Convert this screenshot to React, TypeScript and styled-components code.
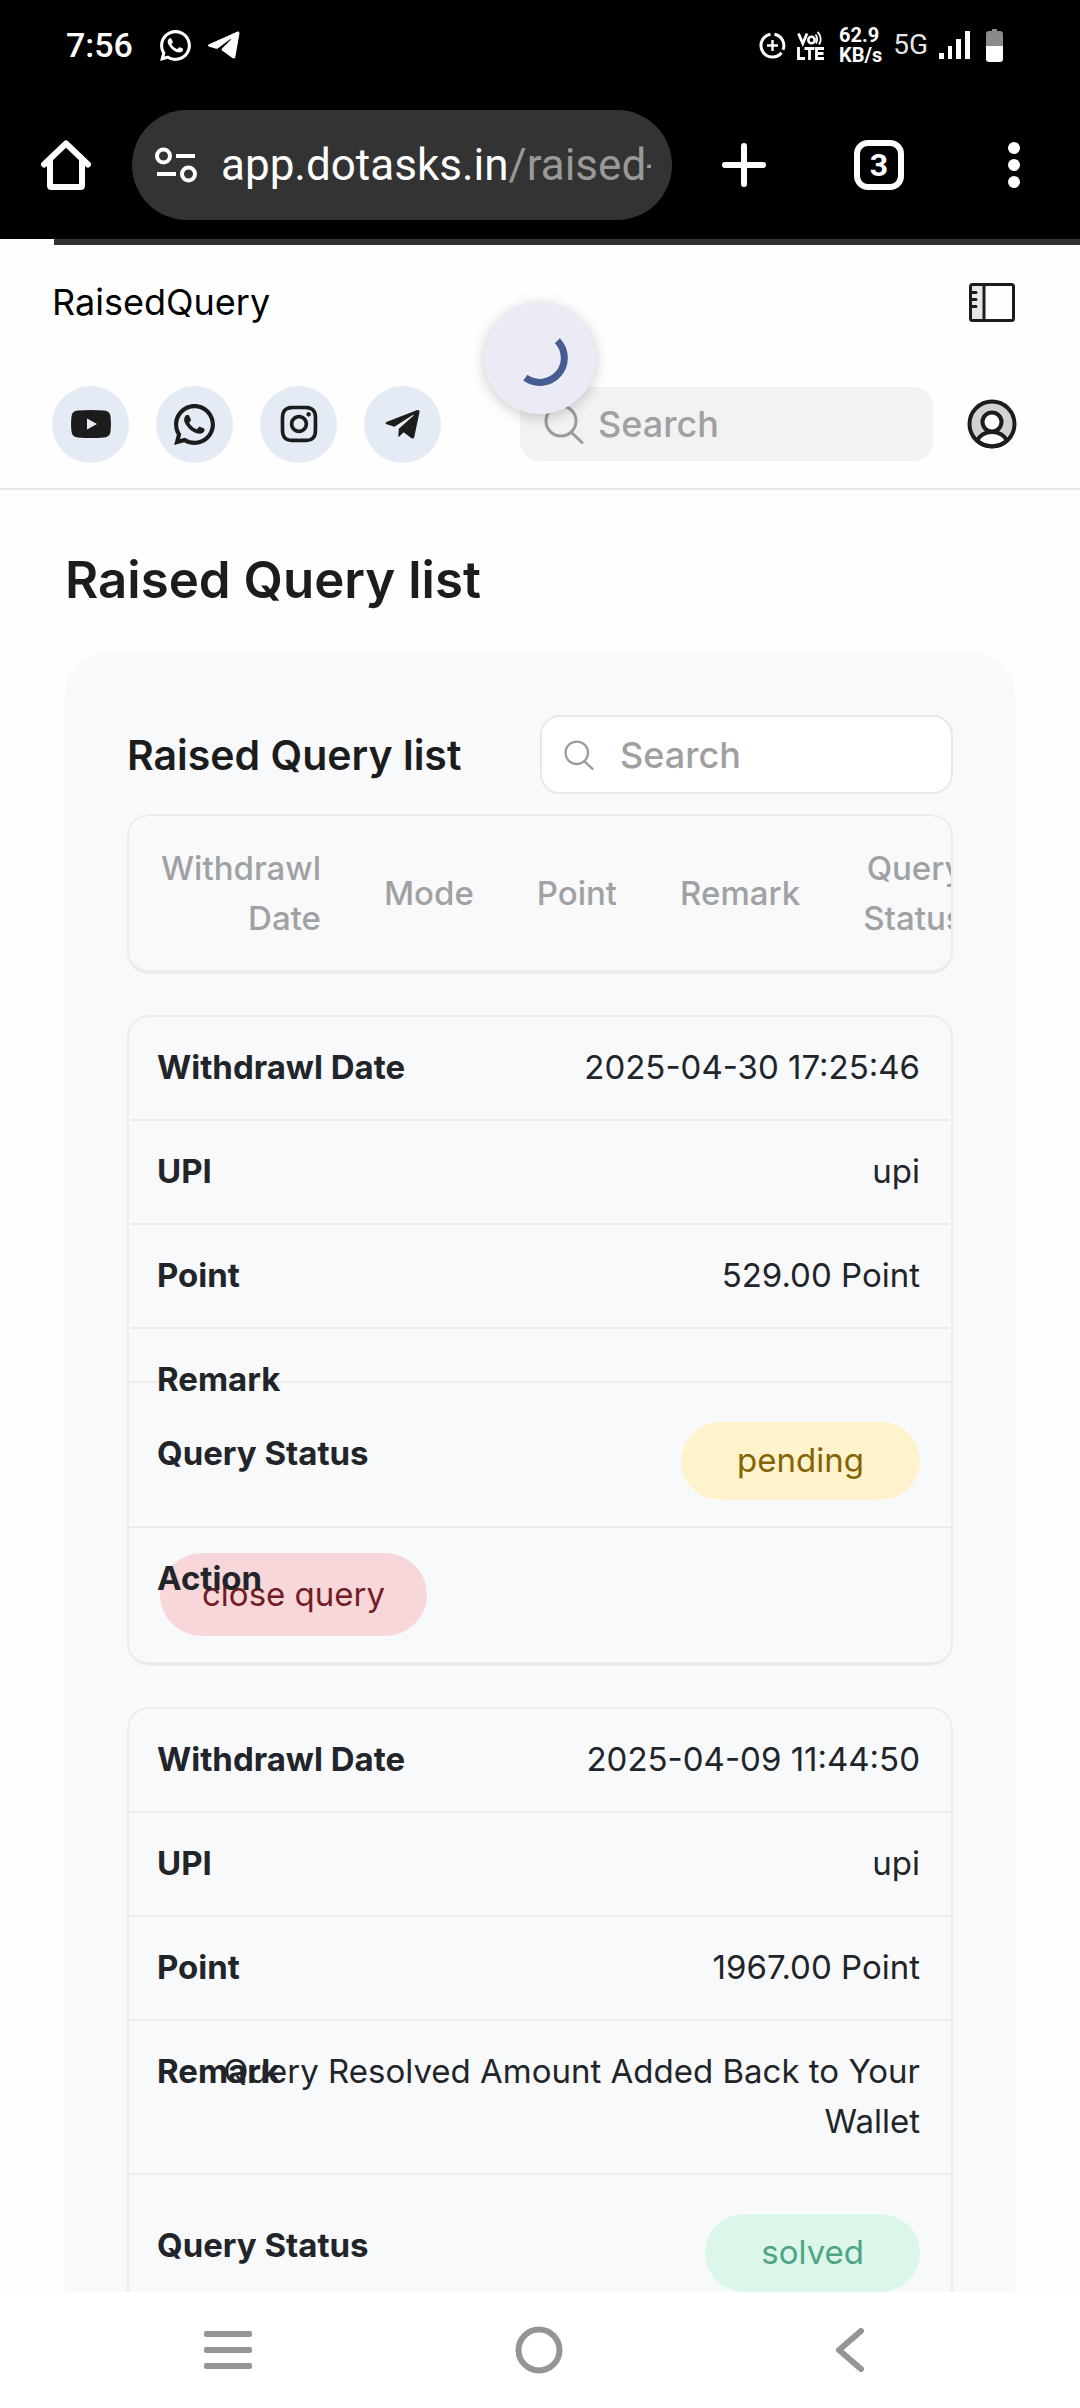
import React from "react";
import styled, { createGlobalStyle } from "styled-components";
import { FaTelegramPlane } from "react-icons/fa";
import { RiWhatsappLine, RiInstagramLine } from "react-icons/ri";

const GlobalStyle = createGlobalStyle`
  *, *::before, *::after { box-sizing: border-box; }
  body {
    margin: 0;
    background: #fefefe;
    color: #212529;
    font-family: Inter, Roboto, sans-serif;
    font-size: 33px;
    line-height: 50px;
  }
  button, input { font: inherit; color: inherit; }
  h1, h2 { margin: 0; }
  svg { display: block; flex: none; }
`;

const Screen = styled.div`
  display: flex;
  flex-direction: column;
  height: 100vh;
  overflow: hidden;
`;

/* ---------- phone status bar ---------- */

const StatusBar = styled.div`
  display: flex;
  align-items: center;
  justify-content: space-between;
  height: 90px;
  padding: 0 77px 0 66px;
  flex: none;
  background: #000;
  color: #fff;
  font-family: Roboto, sans-serif;
`;

const StatusGroup = styled.div<{ $gap: number }>`
  display: flex;
  align-items: center;
  gap: ${(p) => p.$gap}px;
`;

const Clock = styled.span`
  margin-right: 10px;
  font-size: 34px;
  font-weight: 500;
  line-height: 40px;
`;

const Speed = styled.span`
  margin-left: 4px;
  font-size: 20px;
  font-weight: 700;
  line-height: 20px;
`;

const Network = styled.span`
  font-size: 28px;
  line-height: 32px;
  color: #e4e4e4;
`;

/* ---------- browser toolbar ---------- */

const Toolbar = styled.div`
  display: flex;
  align-items: center;
  height: 149px;
  padding: 20px 36px 19px;
  flex: none;
  background: #000;
  color: #fff;
  font-family: Roboto, sans-serif;
`;

const BareButton = styled.button`
  display: flex;
  align-items: center;
  justify-content: center;
  flex: none;
  width: 60px;
  height: 60px;
  padding: 0;
  border: 0;
  background: none;
  cursor: pointer;
`;

const AddressBar = styled.div`
  display: flex;
  flex: 1;
  align-items: center;
  gap: 22px;
  min-width: 0;
  height: 110px;
  margin: 0 42px 0 36px;
  padding: 0 21px;
  border-radius: 55px;
  background: #333;
`;

const Url = styled.span`
  flex: 1;
  overflow: hidden;
  white-space: nowrap;
  font-size: 44px;
  line-height: 60px;
`;

const UrlPath = styled.span`
  color: #999;
`;

const ToolbarActions = styled.div`
  display: flex;
  gap: 75px;
`;

const TabCount = styled.span`
  display: flex;
  align-items: center;
  justify-content: center;
  width: 50px;
  height: 50px;
  border: 6px solid #fff;
  border-radius: 14px;
  font-size: 32px;
  font-weight: 700;
  line-height: 36px;
`;

const LoadProgress = styled.div`
  display: flex;
  flex: none;
  height: 6px;
  background: #fff;
`;

const LoadRemaining = styled.div`
  flex: none;
  width: 95%;
  margin-left: auto;
  background: #333132;
`;

/* ---------- site header ---------- */

const Viewport = styled.main`
  position: relative;
  flex: 1;
  min-height: 0;
  overflow: hidden;
`;

const SiteHeader = styled.header`
  display: flex;
  flex-direction: column;
  gap: 57px;
  padding: 31px 58px 25px 52px;
  border-bottom: 2px solid #e7e7e7;
`;

const HeaderRow = styled.div<{ $height: number }>`
  display: flex;
  align-items: center;
  justify-content: space-between;
  height: ${(p) => p.$height}px;
`;

const Brand = styled.span`
  color: #000;
  font-size: 36px;
`;

const Socials = styled.nav`
  display: flex;
  flex: 1;
  gap: 27px;
`;

const SocialLink = styled.a`
  display: flex;
  align-items: center;
  justify-content: center;
  width: 77px;
  height: 77px;
  border-radius: 50%;
  background: #e4ebf5;
  color: #1c1c1c;
`;

const SearchBox = styled.label<{ $outlined?: boolean }>`
  display: flex;
  align-items: center;
  gap: ${(p) => (p.$outlined ? 26 : 14)}px;
  width: 413px;
  height: ${(p) => (p.$outlined ? 79 : 74)}px;
  padding: 0 22px;
  border: 2px solid ${(p) => (p.$outlined ? "#e8e8e8" : "#f2f2f2")};
  border-radius: 20px;
  background: ${(p) => (p.$outlined ? "#fff" : "#f2f2f2")};
  color: #a0a0a0;
`;

const SearchInput = styled.input`
  flex: 1;
  width: 100%;
  min-width: 0;
  height: 50px;
  padding: 0;
  border: 0;
  outline: 0;
  background: none;
  font-size: 36px;
  font-weight: 500;
  &::placeholder { color: #a0a0a0; opacity: 1; }
`;

const HeaderTools = styled.div`
  display: flex;
  align-items: center;
  gap: 29px;
`;

const Refresh = styled.div`
  position: absolute;
  top: 57px;
  left: 50%;
  display: flex;
  align-items: center;
  justify-content: center;
  width: 112px;
  height: 112px;
  margin-left: -56px;
  border-radius: 50%;
  background: #eaebf5;
  box-shadow: 0 3px 14px rgba(0, 0, 0, 0.2);
`;

/* ---------- page ---------- */

const PageTitle = styled.h1`
  padding: 50px 65px 33px;
  color: #1c1c1c;
  font-size: 51px;
  font-weight: 600;
  line-height: 80px;
`;

const Card = styled.section`
  margin: 0 65px;
  padding: 62px;
  border-radius: 40px;
  background: #f8f9fb;
`;

const CardHeader = styled.div`
  display: flex;
  align-items: center;
  justify-content: space-between;
  margin-bottom: 20px;
`;

const CardTitle = styled.h2`
  color: #1c1c1c;
  font-size: 41px;
  font-weight: 600;
`;

const DataTable = styled.table`
  display: block;
`;

const Head = styled.thead`
  display: block;
`;

const Body = styled.tbody`
  display: block;
`;

const HeadRow = styled.tr`
  display: flex;
  align-items: center;
  height: 160px;
  overflow: hidden;
  border: 2px solid #ebecee;
  border-bottom-width: 4px;
  border-radius: 22px;
`;

const HeadCell = styled.th`
  flex: none;
  width: min-content;
  padding: 0 31px 0 32px;
  color: #a0a1a3;
  font-weight: 500;
  text-align: right;
`;

const Record = styled.tr`
  display: block;
  margin-top: 41px;
  border: 2px solid #ebecee;
  border-bottom-width: 4px;
  border-radius: 22px;
`;

const cellPadding = {
  text: "25px 31px 27px 28px",
  status: "39px 31px 26px 28px",
  action: "25px 31px 26px 28px",
};

const Cell = styled.td<{ $kind: Kind }>`
  display: flex;
  justify-content: ${(p) => (p.$kind === "action" ? "flex-start" : "flex-end")};
  padding: ${(p) => cellPadding[p.$kind]};
  border-bottom: 2px solid #ebecee;
  text-align: right;
  &:last-child { border-bottom: 0; }
`;

/* Takes no room in the row, so a long value runs underneath it. */
const FieldName = styled.strong<{ $kind: Kind }>`
  z-index: 1;
  width: 0;
  height: 0;
  margin-top: ${(p) => (p.$kind === "status" ? 6 : 0)}px;
  margin-right: ${(p) => (p.$kind === "action" ? 3 : 0)}px;
  white-space: nowrap;
  font-weight: 700;
`;

const FieldValue = styled.span`
  flex: 1;
`;

const Badge = styled.span<{ $tone: Tone }>`
  flex: none;
  margin-left: auto;
  padding: 13px 56px 15px;
  border-radius: 39px;
  background: ${(p) => (p.$tone === "solved" ? "#dcf7ea" : "#fff3cd")};
  color: ${(p) => (p.$tone === "solved" ? "#4fa483" : "#856404")};
`;

const CloseButton = styled.button`
  height: 83px;
  padding: 0 42px 2px;
  border: 0;
  border-radius: 42px;
  background: #f8d7da;
  color: #721c24;
  cursor: pointer;
`;

/* ---------- phone navigation ---------- */

const PhoneNav = styled.nav`
  display: flex;
  align-items: center;
  justify-content: space-between;
  flex: none;
  height: 116px;
  padding: 0 200px 0 198px;
  background: #fff;
  color: #959595;
`;

type Kind = "text" | "status" | "action";
type Tone = "pending" | "solved";
type Field = { name: string; kind: Kind; value: string };

const columns = ["Withdrawl Date", "Mode", "Point", "Remark", "Query Status"];

const records: Field[][] = [
  [
    { name: "Withdrawl Date", kind: "text", value: "2025-04-30 17:25:46" },
    { name: "UPI", kind: "text", value: "upi" },
    { name: "Point", kind: "text", value: "529.00 Point" },
    { name: "Remark", kind: "text", value: "" },
    { name: "Query Status", kind: "status", value: "pending" },
    { name: "Action", kind: "action", value: "close query" },
  ],
  [
    { name: "Withdrawl Date", kind: "text", value: "2025-04-09 11:44:50" },
    { name: "UPI", kind: "text", value: "upi" },
    { name: "Point", kind: "text", value: "1967.00 Point" },
    { name: "Remark", kind: "text", value: "Query Resolved Amount Added Back to Your Wallet" },
    { name: "Query Status", kind: "status", value: "solved" },
  ],
];

function SearchIcon({ size, stroke }: { size: number; stroke: number }) {
  return (
    <svg width={size} height={size} viewBox="0 0 40 40" fill="none" stroke="#9b9b9b" strokeWidth={stroke} strokeLinecap="round">
      <circle cx="17" cy="17" r="15" />
      <path d="M27.500 28.500 38 38.500" />
    </svg>
  );
}

function FieldContent({ field }: { field: Field }) {
  if (field.kind === "status") return <Badge $tone={field.value as Tone}>{field.value}</Badge>;
  if (field.kind === "action") return <CloseButton type="button">{field.value}</CloseButton>;
  return <FieldValue>{field.value}</FieldValue>;
}

function PhoneStatus() {
  return (
    <StatusBar>
      <StatusGroup $gap={14}>
        <Clock>7:56</Clock>
        <RiWhatsappLine size={37} />
        <svg width="32" height="28" viewBox="0 0 32 28" fill="#fff">
          <path d="M1 13.2 29 .8c1.600-.7 2.700.2 2.400 1.900l-4 23c-.3 1.700-1.500 2.300-3 1.300l-10-7.200c-1.200-.9-1.100-1.700-.2-2.600l8.300-8.300c.8-.8.3-1.100-.7-.5L10 17.200c-.9.600-1.700.6-2.700.3l-6-1.800c-1.700-.5-1.700-1.700-.3-2.500z" />
        </svg>
      </StatusGroup>
      <StatusGroup $gap={11}>
        <svg width="27" height="27" viewBox="0 0 27 27" fill="none" stroke="#fff">
          <path d="M11.500 2.200A11.500 11.500 0 1 0 22.500 20.700M15.500 2.200A11.500 11.500 0 0 1 24 17.800" strokeWidth="3" />
          <path d="M13.500 8v11M8 13.500h11" strokeWidth="2.400" />
        </svg>
        <svg width="27" height="29" viewBox="0 0 27 29" fill="none" stroke="#fff" strokeWidth="2.800" role="img" aria-label="VoLTE">
          <path d="M1.500 2.500 5.800 12.500 10 2.500" />
          <circle cx="14.500" cy="9" r="3.200" strokeWidth="2.600" />
          <path d="M18.500 3.500c2 2.500 2 6 .5 9M20.500 1c4 3.500 4 9 1.500 12.500" strokeWidth="1.800" />
          <path d="M1.500 16v11.500H8M7.500 17.500h10M12.500 17.500V29M27 17.500h-7.500v10H27M19.500 22.500h7" />
        </svg>
        <Speed>
          62.9
          <br />
          KB/s
        </Speed>
        <Network>5G</Network>
        <svg width="31" height="28" viewBox="0 0 31 28" fill="#fff">
          <path d="M0 22h5v6H0zM9 15h4v13H9zM17 8h5v20h-5zM26 0h5v28h-5z" />
        </svg>
        <svg width="22" height="33" viewBox="0 0 22 33">
          <path d="M11 0h5v2h3q3 0 3 3v12H5V5q0-3 3-3h3z" fill="#8a8a8a" />
          <path d="M5 17h17v13q0 3-3 3H8q-3 0-3-3z" fill="#fff" />
        </svg>
      </StatusGroup>
    </StatusBar>
  );
}

function BrowserToolbar() {
  return (
    <Toolbar>
      <BareButton type="button" aria-label="Home">
        <svg width="50" height="50" viewBox="0 0 50 50" fill="none" stroke="#fff" strokeWidth="6" strokeLinecap="round" strokeLinejoin="round">
          <path d="M3 24.500 25 3.500 47 24.500" />
          <path d="M9 21v24.500q0 1.500 1.500 1.500h29q1.500 0 1.500-1.500V21" />
        </svg>
      </BareButton>
      <AddressBar>
        <svg width="46" height="36" viewBox="0 0 46 36" fill="none" stroke="#fff" strokeWidth="4">
          <circle cx="10.500" cy="9" r="6.500" />
          <circle cx="35.500" cy="27" r="6.500" />
          <path d="M23 9h19M4 27h19" />
        </svg>
        <Url>
          app.dotasks.in<UrlPath>/raised-query</UrlPath>
        </Url>
      </AddressBar>
      <ToolbarActions>
        <BareButton type="button" aria-label="New tab">
          <svg width="44" height="44" viewBox="0 0 44 44" stroke="#fff" strokeWidth="6" strokeLinecap="round">
            <path d="M22 3v38M3 22h38" />
          </svg>
        </BareButton>
        <BareButton type="button" aria-label="Tabs">
          <TabCount>3</TabCount>
        </BareButton>
        <BareButton type="button" aria-label="More">
          <svg width="12" height="46" viewBox="0 0 12 46" fill="#fff">
            <circle cx="6" cy="6" r="6" />
            <circle cx="6" cy="23" r="6" />
            <circle cx="6" cy="40" r="6" />
          </svg>
        </BareButton>
      </ToolbarActions>
    </Toolbar>
  );
}

function Header() {
  return (
    <SiteHeader>
      <HeaderRow $height={52}>
        <Brand>RaisedQuery</Brand>
        <BareButton type="button" aria-label="Toggle sidebar">
          <svg width="46" height="39" viewBox="0 0 46 39" fill="none" stroke="#1c1c1c" strokeWidth="3" strokeLinecap="round">
            <path d="M2 2h13v35H2z" fill="#e6e6e6" stroke="none" />
            <rect x="1.500" y="1.500" width="43" height="36" rx="2" />
            <path d="M15 2v35M2 9.500h5M2 16.500h5M2 23.500h5" />
          </svg>
        </BareButton>
      </HeaderRow>
      <HeaderRow $height={78}>
        <Socials aria-label="Social media">
          <SocialLink href="#youtube" aria-label="YouTube">
            <svg width="40" height="28" viewBox="0 0 40 28">
              <path d="M7 .6Q20-.4 33 .6q6 .4 6.500 6Q40.400 14 39.500 21.400q-.5 5.600-6.500 6-13 1-26 0-6-.4-6.500-6Q-.4 14 .5 6.600.9 1 7 .6z" fill="#1c1c1c" />
              <path d="M16 8.500v11l10-5.500z" fill="#e4ebf5" />
            </svg>
          </SocialLink>
          <SocialLink href="#whatsapp" aria-label="WhatsApp">
            <RiWhatsappLine size={49} />
          </SocialLink>
          <SocialLink href="#instagram" aria-label="Instagram">
            <RiInstagramLine size={44} />
          </SocialLink>
          <SocialLink href="#telegram" aria-label="Telegram">
            <FaTelegramPlane size={39} />
          </SocialLink>
        </Socials>
        <HeaderTools>
          <SearchBox>
            <SearchIcon size={40} stroke={3} />
            <SearchInput type="search" placeholder="Search" aria-label="Search" />
          </SearchBox>
          <BareButton type="button" aria-label="Account">
            <svg width="50" height="50" viewBox="0 0 50 50" fill="none" stroke="#1c1c1c" strokeWidth="4">
              <circle cx="25" cy="25" r="22.500" fill="#d2d2d2" />
              <path d="M10 41.500c6-11.500 24-11.500 30 0-8 7.500-22 7.500-30 0z" fill="#fff" />
              <circle cx="25" cy="23" r="9.500" fill="#fff" />
            </svg>
          </BareButton>
        </HeaderTools>
      </HeaderRow>
    </SiteHeader>
  );
}

function QueryTable() {
  return (
    <DataTable>
      <Head>
        <HeadRow>
          {columns.map((name) => (
            <HeadCell key={name} scope="col">
              {name}
            </HeadCell>
          ))}
        </HeadRow>
      </Head>
      <Body>
        {records.map((fields, i) => (
          <Record key={i}>
            {fields.map((field) => (
              <Cell key={field.name} $kind={field.kind}>
                <FieldName $kind={field.kind}>{field.name}</FieldName>
                <FieldContent field={field} />
              </Cell>
            ))}
          </Record>
        ))}
      </Body>
    </DataTable>
  );
}

export default function App() {
  return (
    <Screen>
      <GlobalStyle />
      <PhoneStatus />
      <BrowserToolbar />
      <LoadProgress>
        <LoadRemaining />
      </LoadProgress>
      <Viewport>
        <Header />
        <PageTitle>Raised Query list</PageTitle>
        <Card>
          <CardHeader>
            <CardTitle>Raised Query list</CardTitle>
            <SearchBox $outlined>
              <SearchIcon size={30} stroke={3} />
              <SearchInput type="search" placeholder="Search" aria-label="Search queries" />
            </SearchBox>
          </CardHeader>
          <QueryTable />
        </Card>
        <Refresh role="status" aria-label="Refreshing">
          <svg width="56" height="56" viewBox="0 0 56 56" fill="none" stroke="#475d92" strokeWidth="7">
            <path d="M45.300 10.700A24.500 24.500 0 0 1 13.300 47.600" />
          </svg>
        </Refresh>
      </Viewport>
      <PhoneNav aria-label="Phone navigation">
        <BareButton type="button" aria-label="Recent apps">
          <svg width="48" height="38" viewBox="0 0 48 38" fill="#959595">
            <rect width="48" height="6" rx="2" />
            <rect y="16" width="48" height="6" rx="2" />
            <rect y="32" width="48" height="6" rx="2" />
          </svg>
        </BareButton>
        <BareButton type="button" aria-label="Home screen">
          <svg width="48" height="48" viewBox="0 0 48 48" fill="none" stroke="#959595" strokeWidth="6">
            <circle cx="24" cy="24" r="20.500" />
          </svg>
        </BareButton>
        <BareButton type="button" aria-label="Back">
          <svg width="30" height="44" viewBox="0 0 30 44" fill="none" stroke="#959595" strokeWidth="6" strokeLinecap="round" strokeLinejoin="round">
            <path d="M26 3 4 22l22 19" />
          </svg>
        </BareButton>
      </PhoneNav>
    </Screen>
  );
}
